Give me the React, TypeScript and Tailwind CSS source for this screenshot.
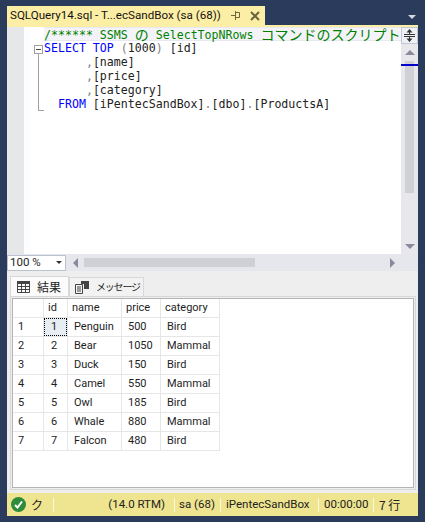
import React from "react";

const rows = [
  ["1", "1", "Penguin", "500", "Bird"],
  ["2", "2", "Bear", "1050", "Mammal"],
  ["3", "3", "Duck", "150", "Bird"],
  ["4", "4", "Camel", "550", "Mammal"],
  ["5", "5", "Owl", "185", "Bird"],
  ["6", "6", "Whale", "880", "Mammal"],
  ["7", "7", "Falcon", "480", "Bird"],
];

function Jp({ children }: { children: string }) {
  return <span className="inline-block align-top h-[12px] text-[14px] font-['Noto_Sans_CJK_JP'] leading-[12px]">{children}</span>;
}

function Line({ children, className = "" }: { children: React.ReactNode; className?: string }) {
  return <div className={`h-[14px] leading-[14px] whitespace-pre text-[11.6px] font-['DejaVu_Sans_Mono'] text-[#222] ${className}`}>{children}</div>;
}

function Sep() {
  return <div className="w-px h-[14px] bg-[#fbf8dc] shrink-0" />;
}

export default function App() {
  return (
    <div className="w-[425px] h-[522px] bg-[#2a3b5c] px-[7px] pt-[6px] pb-[6px] flex flex-col overflow-hidden font-['Roboto'] text-[11px] text-[#1e1e1e]">
      {/* Title bar */}
      <div className="h-[19px] flex items-start shrink-0">
        <div className="w-[258px] h-[19px] bg-[#fdeea5] flex items-center pl-[3px] text-[11.6px] text-[#111] whitespace-nowrap">
          <span className="flex-1">SQLQuery14.sql - T...ecSandBox (sa (68))</span>
          <svg width="9" height="9" viewBox="0 0 9 9" className="mr-[10px]">
            <path d="M0 4.5h4M4.5 0v9M4.5 1.5h4v5h-4" stroke="#6b6440" fill="none" />
          </svg>
          <svg width="10" height="10" viewBox="0 0 10 10" className="mr-[5px]">
            <path d="M1 1l8 8M9 1l-8 8" stroke="#6b6440" strokeWidth="2" fill="none" />
          </svg>
        </div>
        <div className="ml-auto mr-[2px] mt-[9px] w-0 h-0 border-l-[4px] border-r-[4px] border-t-[4px] border-l-transparent border-r-transparent border-t-[#d5d9e2]" />
      </div>
      <div className="h-[2px] bg-[#fdeea5] shrink-0" />

      {/* Editor */}
      <div className="h-[227px] flex shrink-0 bg-white">
        <div className="w-[17px] bg-[#e6e7e8] shrink-0" />
        <div className="w-[7px] bg-[#fdfdfd] shrink-0" />
        <div className="flex-1 min-w-0 flex">
          <div className="w-[13px] shrink-0 pt-[18px]">
            <div className="w-[9px] h-[9px] border border-[#a0a0a0] flex items-center justify-center bg-white ml-[3px]">
              <div className="w-[5px] h-px bg-[#444]" />
            </div>
            <div className="w-[6px] h-[57px] border-l border-b border-[#a0a0a0] ml-[7px]" />
          </div>
          <div className="flex-1 min-w-0">
            <Line className="bg-[#f4f4f8] border-y border-[#e8e8f0] leading-[12px] text-[#008000]">
              {"/****** SSMS "}<Jp>の</Jp>{" SelectTopNRows "}<Jp>コマンドのスクリプト</Jp>
            </Line>
            <Line>
              <span className="text-[#0000ff]">SELECT TOP</span> <span className="text-[#808080]">(</span>1000<span className="text-[#808080]">)</span> [id]
            </Line>
            <Line>{"      "}<span className="text-[#808080]">,</span>[name]</Line>
            <Line>{"      "}<span className="text-[#808080]">,</span>[price]</Line>
            <Line>{"      "}<span className="text-[#808080]">,</span>[category]</Line>
            <Line>
              {"  "}<span className="text-[#0000ff]">FROM</span> [iPentecSandBox]<span className="text-[#808080]">.</span>[dbo]<span className="text-[#808080]">.</span>[ProductsA]
            </Line>
          </div>
        </div>
        {/* Vertical scrollbar */}
        <div className="w-[17px] shrink-0 bg-[#e8e8ec] flex flex-col items-center relative">
          <div className="w-[17px] h-[17px] bg-[#eef0f6] border border-[#c2c7d6] flex items-center justify-center">
            <svg width="11" height="13" viewBox="0 0 11 13">
              <path d="M5.5 0L2.5 3.5h6zM5.5 13L2.5 9.5h6z" fill="#333" />
              <path d="M0 5.5h11M0 7.5h11M5.5 2v3M5.5 8v3" stroke="#333" />
            </svg>
          </div>
          <div className="mt-[6px] w-0 h-0 border-l-[5px] border-r-[5px] border-b-[5px] border-l-transparent border-r-transparent border-b-[#8a8a9c]" />
          <div className="w-[9px] h-[132px] bg-[#cfd0d4] mt-[6px]" />
          <div className="absolute left-0 top-[37px] w-[17px] h-[2px] bg-[#0000cc]" />
          <div className="mt-auto mb-[5px] w-0 h-0 border-l-[5px] border-r-[5px] border-t-[5px] border-l-transparent border-r-transparent border-t-[#8a8a9c]" />
        </div>
      </div>

      {/* Zoom and horizontal scrollbar */}
      <div className="h-[17px] flex items-center bg-[#e6e7ec] shrink-0">
        <div className="w-[59px] h-[16px] bg-white border border-[#bcc1d0] flex items-center pl-[2px] text-[11.5px] shrink-0">
          <span className="flex-1">100 %</span>
          <div className="mr-[3px] w-0 h-0 border-l-[3px] border-r-[3px] border-t-[3px] border-l-transparent border-r-transparent border-t-[#333]" />
        </div>
        <div className="ml-[7px] w-0 h-0 border-t-[5px] border-b-[5px] border-r-[5px] border-t-transparent border-b-transparent border-r-[#8a8a9c]" />
        <div className="ml-[6px] w-[171px] h-[9px] bg-[#cfd0d4]" />
        <div className="ml-auto mr-[23px] w-0 h-0 border-t-[5px] border-b-[5px] border-l-[5px] border-t-transparent border-b-transparent border-l-[#8a8a9c]" />
      </div>

      {/* Results */}
      <div className="flex-1 min-h-0 bg-[#eeeeee] flex flex-col">
        <div className="h-[25px] flex items-end pl-[3px] shrink-0">
          <div className="w-[59px] h-[20px] bg-[#fbfbfb] border border-b-0 border-[#d8d8d8] flex items-center pl-[6px] gap-[7px] text-[12px] font-['Noto_Sans_CJK_JP'] leading-none">
            <svg width="13" height="12" viewBox="0 0 13 12">
              <path d="M0 0h13v3H0z" fill="#444" />
              <path d="M0.5 0.5h12v11h-12zM0.5 5.5h12M0.5 8.5h12M4.5 0.5v11M8.5 0.5v11" stroke="#444" fill="none" />
            </svg>
            <span>結果</span>
          </div>
          <div className="w-[75px] h-[19px] bg-[#f2f2f2] border border-b-0 border-[#d8d8d8] flex items-center pl-[5px] gap-[7px] text-[10px] tracking-[-1.2px] font-['Noto_Sans_CJK_JP'] leading-none whitespace-nowrap">
            <svg width="14" height="13" viewBox="0 0 14 13">
              <path d="M0.5 3.5h7v9h-7zM2 6h4M2 8h4M2 10h4" stroke="#444" fill="none" />
              <path d="M6 0h8v8H9V3H6z" fill="#444" />
            </svg>
            <span>メッセージ</span>
          </div>
        </div>
        <div className="ml-[3px] mr-[2px] flex-1 min-h-0 border border-[#d8d8d8] p-px">
          <div className="h-full border border-[#b4b4b4] bg-white overflow-hidden">
            <div className="grid grid-cols-[31px_24px_54px_39px_59px] w-fit text-[11px] leading-[18px]">
              {["", "id", "name", "price", "category"].map((h, i) => (
                <div key={i} className="h-[19px] border-r border-b border-[#e6e6e6] pl-[4px]">{h}</div>
              ))}
              {rows.map((r) => (
                <React.Fragment key={r[0]}>
                  <div className="h-[19px] border-r border-b border-[#e6e6e6] pl-[5px]">{r[0]}</div>
                  <div className="h-[19px] border-r border-b border-[#e6e6e6] pl-[7px]">
                    {r[0] === "1" ? (
                      <div className="h-[18px] -ml-[7px] pl-[6px] bg-[#e6eef3] border border-dotted border-[#000] leading-[16px]">{r[1]}</div>
                    ) : r[1]}
                  </div>
                  <div className="h-[19px] border-r border-b border-[#e6e6e6] pl-[6px]">{r[2]}</div>
                  <div className="h-[19px] border-r border-b border-[#e6e6e6] pl-[6px]">{r[3]}</div>
                  <div className="h-[19px] border-r border-b border-[#e6e6e6] pl-[6px]">{r[4]}</div>
                </React.Fragment>
              ))}
            </div>
          </div>
        </div>
        <div className="h-[3px] shrink-0" />
      </div>

      {/* Status bar */}
      <div className="h-[23px] bg-[#efe48f] shrink-0 flex items-center text-[11.5px] text-[#222] whitespace-nowrap">
        <div className="w-[46px] flex items-center pl-[4px] shrink-0">
          <div className="w-[15px] h-[15px] rounded-full bg-[#2e8b3a] flex items-center justify-center">
            <svg width="9" height="9" viewBox="0 0 9 9"><path d="M1 5l2.5 2.5L8 1.5" stroke="#fff" strokeWidth="2" fill="none" /></svg>
          </div>
          <span className="ml-[5px] text-[12px] font-['Noto_Sans_CJK_JP']">ク</span>
        </div>
        <Sep />
        <span className="w-[120px] text-right pr-[9px] shrink-0">(14.0 RTM)</span>
        <Sep />
        <span className="w-[45px] pl-[4px] shrink-0">sa (68)</span>
        <Sep />
        <span className="w-[97px] pl-[5px] shrink-0">iPentecSandBox</span>
        <Sep />
        <span className="w-[54px] pl-[5px] shrink-0">00:00:00</span>
        <Sep />
        <span className="pl-[5px] text-[12px] font-['Noto_Sans_CJK_JP']">7 行</span>
      </div>
    </div>
  );
}
